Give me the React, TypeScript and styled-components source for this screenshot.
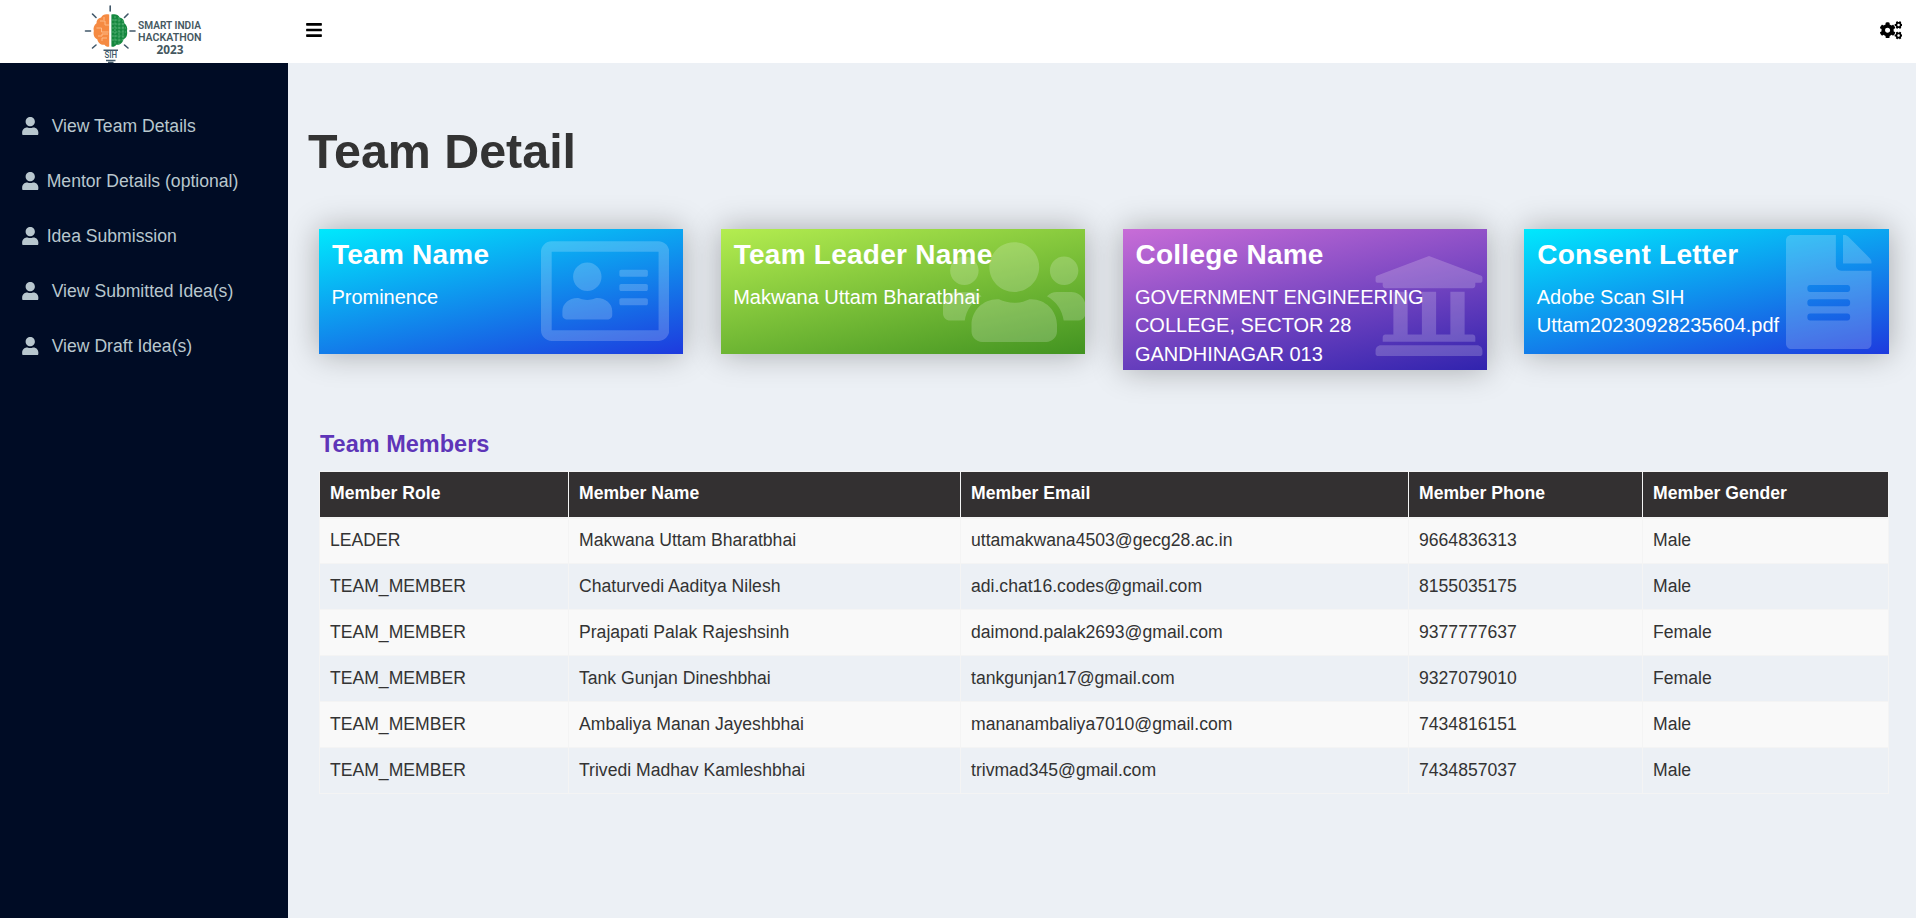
import React from "react";
import styled, { createGlobalStyle } from "styled-components";
import {
  FaUser,
  FaBars,
  FaCogs,
  FaRegAddressCard,
  FaUsers,
  FaUniversity,
  FaFileAlt,
} from "react-icons/fa";

const GlobalStyle = createGlobalStyle`
  *, *::before, *::after { box-sizing: border-box; }
  body {
    margin: 0;
    font-family: "Liberation Sans", Arial, sans-serif;
    font-size: 17.6px;
    line-height: 1.42857;
    color: #333;
    background: #ecf0f5;
  }
`;

const Page = styled.div`
  display: flex;
  flex-direction: column;
  height: 918px;
  overflow: hidden;
`;

const TopBar = styled.header`
  display: flex;
  height: 63px;
  background: #fff;
`;

const Brand = styled.div`
  width: 288px;
  flex: none;
  padding-left: 82px;
`;

const NavBar = styled.nav`
  flex: 1;
  display: flex;
  align-items: center;
  justify-content: space-between;
  padding: 0 14px 3px 17px;
  color: #000;
`;

const Body = styled.div`
  flex: 1;
  display: flex;
  min-height: 0;
`;

const Sidebar = styled.aside`
  width: 288px;
  flex: none;
  background: #000c25;
  padding-top: 36px;
`;

const MenuItem = styled.a<{ $gap: number }>`
  display: flex;
  align-items: center;
  height: 55px;
  padding-left: 21px;
  gap: ${(p) => p.$gap}px;
  color: #b8c7ce;
  white-space: nowrap;

  svg {
    flex: none;
    margin-bottom: 1px;
  }
`;

const Content = styled.main`
  flex: 1;
  min-width: 0;
  padding: 53px 27px 0 31px;
`;

const PageTitle = styled.h1`
  margin: 0;
  text-indent: -11px;
  font-size: 48.4px;
  font-weight: 700;
  line-height: 70px;
  color: #333;
`;

const CardRow = styled.section`
  display: grid;
  grid-template-columns: repeat(4, 364.45px);
  column-gap: 37.33px;
  align-items: start;
  height: 141px;
  margin-top: 43px;
`;

const Card = styled.article<{ $from: string; $to: string }>`
  position: relative;
  min-height: 125px;
  padding: 8px 12px 1.8px 12.4px;
  color: #fff;
  background: linear-gradient(168deg, ${(p) => p.$from}, ${(p) => p.$to});
  box-shadow: 0 0 30px rgba(0, 0, 0, 0.3);
`;

const CardTitle = styled.h2`
  position: relative;
  margin: 0 0 10px 0.6px;
  font-size: 28px;
  line-height: 36px;
  letter-spacing: 0.25px;
  white-space: nowrap;
`;

const CardText = styled.p<{ $width?: number }>`
  position: relative;
  margin: 0;
  font-size: 20px;
  line-height: 28.4px;
  max-width: ${(p) => (p.$width ? `${p.$width}px` : "none")};
`;

const Watermark = styled.span<{ $top: number; $right: number; $width: number }>`
  position: absolute;
  top: ${(p) => p.$top}px;
  right: ${(p) => p.$right}px;
  color: rgba(255, 255, 255, 0.2);

  svg {
    display: block;
    height: 114px;
    width: ${(p) => p.$width}px;
  }
`;

const SectionTitle = styled.h3`
  margin: 57px 0 10px 1px;
  font-size: 23.5px;
  line-height: 34px;
  color: #5e35b8;
`;

const Table = styled.table`
  width: 1570px;
  border-collapse: collapse;
  table-layout: fixed;
  border: 1px solid #f4f4f4;
`;

const HeadCell = styled.th<{ $width: number }>`
  width: ${(p) => p.$width}px;
  height: 46px;
  padding: 0 10px 1px;
  border: 1px solid #f4f4f4;
  border-bottom-width: 2px;
  background: #333031;
  color: #fff;
  text-align: left;
  line-height: 25px;
`;

const Row = styled.tr`
  height: 46px;

  &:nth-child(odd) {
    background: #f9f9f9;
  }
`;

const Cell = styled.td`
  padding: 0 10px;
  border: 1px solid #f4f4f4;
  line-height: 25px;
`;

const LogoDrawing = styled.svg`
  display: block;
  overflow: visible;
`;

const rays = [
  [28.2, 6, 28.2, 11],
  [10.5, 14, 14, 17.5],
  [42.5, 17.5, 46, 14],
  [3.5, 31, 8.5, 31],
  [48, 31, 53, 31],
  [10.5, 48, 14, 45],
  [42.5, 45, 46, 48],
];

const Logo = () => (
  <LogoDrawing width="140" height="63" viewBox="0 0 140 63">
    <g stroke="#41586a" strokeWidth="1.6" strokeLinecap="round">
      {rays.map(([x1, y1, x2, y2]) => (
        <line key={`${x1}-${y1}`} x1={x1} y1={y1} x2={x2} y2={y2} />
      ))}
    </g>
    <path
      d="M27.2 14.6C24 13.6 20.600 14.300 19.100 17.400C16 18 14.300 20.400 14.500 23.200C12 25 11 28 11.800 31C11 35 12.500 38 15.300 39.300C16 43 19 45.300 22.500 44.800C24 46.800 26 47.200 27.200 46.500Z"
      fill="#f58a42"
    />
    <path
      d="M29.400 14.600C32.800 13.600 36.200 14.300 37.700 17.400C40.800 18 42.500 20.400 42.300 23.200C44.800 25 45.800 28 45 31C45.800 35 44.300 38 41.500 39.300C40.800 43 37.800 45.300 34.300 44.800C32.800 46.800 30.800 47.200 29.400 46.500Z"
      fill="#15883f"
    />
    <path
      d="M18 21h5v4h4M14.500 28h5v4h7M16 36h4v-2h6M20 41v-3h5M22 17v3"
      fill="none"
      stroke="#ffc08e"
      strokeWidth="0.9"
    />
    <path
      d="M33 16v29M37 17v27M41 20v20M30 20h9M30 24h12M30 28h14M30 32h14M30 36h13M30 40h11"
      fill="none"
      stroke="#6fc089"
      strokeWidth="0.7"
      strokeDasharray="2.200 1"
    />
    <path d="M21.500 50.300h14.500M24 60.500h9.500M26 62.400h5.500" stroke="#41586a" strokeWidth="1.500" />
    <text x="22.500" y="58.200" fontFamily="Roboto" fontWeight="500" fontSize="8.200" textLength="12.500" lengthAdjust="spacingAndGlyphs" fill="#41586a">
      SIH
    </text>
    <g fill="#45585f" fontFamily="Roboto" fontWeight="600">
      <text x="56" y="29.100" fontSize="10.700" textLength="63" lengthAdjust="spacingAndGlyphs">
        SMART INDIA
      </text>
      <text x="56" y="41.300" fontSize="10.700" textLength="63.500" lengthAdjust="spacingAndGlyphs">
        HACKATHON
      </text>
      <text x="74.500" y="54.300" fontFamily="Open Sans" fontWeight="700" fontSize="11.500" textLength="27" lengthAdjust="spacingAndGlyphs">
        2023
      </text>
    </g>
  </LogoDrawing>
);

const menu = [
  { label: "View Team Details", gap: 12.2 },
  { label: "Mentor Details (optional)", gap: 7.2 },
  { label: "Idea Submission", gap: 7.2 },
  { label: "View Submitted Idea(s)", gap: 12.2 },
  { label: "View Draft Idea(s)", gap: 12.2 },
];

const BLUE = ["#00e9fd", "#1e3ade"];
const GREEN = ["#b4ed50", "#429321"];
const PURPLE = ["#c86dd7", "#3023ae"];

const cards = [
  {
    title: "Team Name",
    text: "Prominence",
    colors: BLUE,
    Icon: FaRegAddressCard,
    top: 5,
    right: 14,
    iconWidth: 128.25,
  },
  {
    title: "Team Leader Name",
    text: "Makwana Uttam Bharatbhai",
    colors: GREEN,
    Icon: FaUsers,
    top: 6,
    right: 0,
    iconWidth: 142.5,
  },
  {
    title: "College Name",
    text: "GOVERNMENT ENGINEERING COLLEGE, SECTOR 28 GANDHINAGAR 013",
    colors: PURPLE,
    Icon: FaUniversity,
    top: 20,
    right: 0.5,
    iconWidth: 114,
    textWidth: 300,
  },
  {
    title: "Consent Letter",
    text: "Adobe Scan SIH Uttam20230928235604.pdf",
    colors: BLUE,
    Icon: FaFileAlt,
    top: 6,
    right: 17,
    iconWidth: 85.5,
    textWidth: 300,
  },
];

const columns = [
  { label: "Member Role", width: 249 },
  { label: "Member Name", width: 392 },
  { label: "Member Email", width: 448 },
  { label: "Member Phone", width: 234 },
  { label: "Member Gender", width: 246 },
];

const members = [
  ["LEADER", "Makwana Uttam Bharatbhai", "uttamakwana4503@gecg28.ac.in", "9664836313", "Male"],
  ["TEAM_MEMBER", "Chaturvedi Aaditya Nilesh", "adi.chat16.codes@gmail.com", "8155035175", "Male"],
  ["TEAM_MEMBER", "Prajapati Palak Rajeshsinh", "daimond.palak2693@gmail.com", "9377777637", "Female"],
  ["TEAM_MEMBER", "Tank Gunjan Dineshbhai", "tankgunjan17@gmail.com", "9327079010", "Female"],
  ["TEAM_MEMBER", "Ambaliya Manan Jayeshbhai", "mananambaliya7010@gmail.com", "7434816151", "Male"],
  ["TEAM_MEMBER", "Trivedi Madhav Kamleshbhai", "trivmad345@gmail.com", "7434857037", "Male"],
];

export default function App() {
  return (
    <Page>
      <GlobalStyle />
      <TopBar>
        <Brand>
          <Logo />
        </Brand>
        <NavBar>
          <FaBars size={18} />
          <FaCogs size={22.5} />
        </NavBar>
      </TopBar>
      <Body>
        <Sidebar>
          {menu.map((item) => (
            <MenuItem key={item.label} $gap={item.gap}>
              <FaUser size={18.5} />
              {item.label}
            </MenuItem>
          ))}
        </Sidebar>
        <Content>
          <PageTitle>Team Detail</PageTitle>
          <CardRow>
            {cards.map(({ title, text, colors, Icon, top, right, iconWidth, textWidth }) => (
              <Card key={title} $from={colors[0]} $to={colors[1]}>
                <Watermark $top={top} $right={right} $width={iconWidth}>
                  <Icon />
                </Watermark>
                <CardTitle>{title}</CardTitle>
                <CardText $width={textWidth}>{text}</CardText>
              </Card>
            ))}
          </CardRow>
          <SectionTitle>Team Members</SectionTitle>
          <Table>
            <thead>
              <tr>
                {columns.map((c) => (
                  <HeadCell key={c.label} $width={c.width}>
                    {c.label}
                  </HeadCell>
                ))}
              </tr>
            </thead>
            <tbody>
              {members.map((m) => (
                <Row key={m[1]}>
                  {m.map((value, i) => (
                    <Cell key={i}>{value}</Cell>
                  ))}
                </Row>
              ))}
            </tbody>
          </Table>
        </Content>
      </Body>
    </Page>
  );
}
